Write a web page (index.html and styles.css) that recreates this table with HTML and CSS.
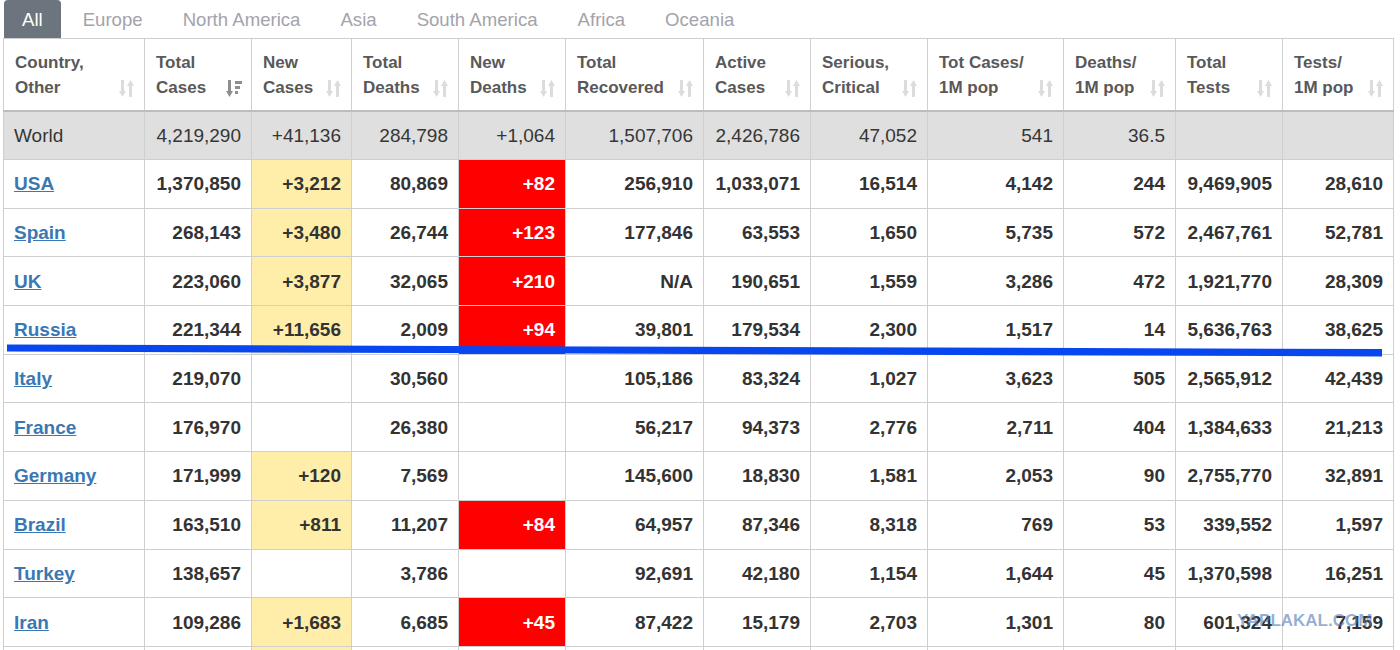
FILE: index.html
```html
<!DOCTYPE html>
<html>
<head>
<meta charset="utf-8">
<link rel="stylesheet" href="styles.css">
</head>
<body>
<div class="page">
  <nav class="tabs">
    <span class="tab active">All</span>
    <span class="tab">Europe</span>
    <span class="tab">North America</span>
    <span class="tab">Asia</span>
    <span class="tab">South America</span>
    <span class="tab">Africa</span>
    <span class="tab">Oceania</span>
  </nav>
  <table class="stats">
    <colgroup>
      <col style="width:141px"><col style="width:107px"><col style="width:100px"><col style="width:107px">
      <col style="width:107px"><col style="width:138px"><col style="width:107px"><col style="width:117px">
      <col style="width:136px"><col style="width:112px"><col style="width:107px"><col style="width:111px">
    </colgroup>
    <thead>
      <tr>
        <th><div class="hc"><span>Country,<br>Other</span><svg class="si" viewBox="0 0 16 17"><use href="#sort"/></svg></div></th>
        <th><div class="hc"><span>Total<br>Cases</span><svg class="si on" viewBox="0 0 16 17"><use href="#sortdesc"/></svg></div></th>
        <th><div class="hc"><span>New<br>Cases</span><svg class="si" viewBox="0 0 16 17"><use href="#sort"/></svg></div></th>
        <th><div class="hc"><span>Total<br>Deaths</span><svg class="si" viewBox="0 0 16 17"><use href="#sort"/></svg></div></th>
        <th><div class="hc"><span>New<br>Deaths</span><svg class="si" viewBox="0 0 16 17"><use href="#sort"/></svg></div></th>
        <th><div class="hc"><span>Total<br>Recovered</span><svg class="si" viewBox="0 0 16 17"><use href="#sort"/></svg></div></th>
        <th><div class="hc"><span>Active<br>Cases</span><svg class="si" viewBox="0 0 16 17"><use href="#sort"/></svg></div></th>
        <th><div class="hc"><span>Serious,<br>Critical</span><svg class="si" viewBox="0 0 16 17"><use href="#sort"/></svg></div></th>
        <th><div class="hc"><span>Tot&nbsp;Cases/<br>1M pop</span><svg class="si" viewBox="0 0 16 17"><use href="#sort"/></svg></div></th>
        <th><div class="hc"><span>Deaths/<br>1M pop</span><svg class="si" viewBox="0 0 16 17"><use href="#sort"/></svg></div></th>
        <th><div class="hc"><span>Total<br>Tests</span><svg class="si" viewBox="0 0 16 17"><use href="#sort"/></svg></div></th>
        <th><div class="hc"><span>Tests/<br>1M pop</span><svg class="si" viewBox="0 0 16 17"><use href="#sort"/></svg></div></th>
      </tr>
    </thead>
    <tbody>
      <tr class="world">
        <td class="name">World</td><td>4,219,290</td><td>+41,136</td><td>284,798</td><td>+1,064</td><td>1,507,706</td><td>2,426,786</td><td>47,052</td><td>541</td><td>36.5</td><td></td><td></td>
      </tr>
      <tr>
        <td class="name"><a href="#">USA</a></td><td>1,370,850</td><td class="nc">+3,212</td><td>80,869</td><td class="nd">+82</td><td>256,910</td><td>1,033,071</td><td>16,514</td><td>4,142</td><td>244</td><td>9,469,905</td><td>28,610</td>
      </tr>
      <tr>
        <td class="name"><a href="#">Spain</a></td><td>268,143</td><td class="nc">+3,480</td><td>26,744</td><td class="nd">+123</td><td>177,846</td><td>63,553</td><td>1,650</td><td>5,735</td><td>572</td><td>2,467,761</td><td>52,781</td>
      </tr>
      <tr>
        <td class="name"><a href="#">UK</a></td><td>223,060</td><td class="nc">+3,877</td><td>32,065</td><td class="nd">+210</td><td>N/A</td><td>190,651</td><td>1,559</td><td>3,286</td><td>472</td><td>1,921,770</td><td>28,309</td>
      </tr>
      <tr>
        <td class="name"><a href="#">Russia</a></td><td>221,344</td><td class="nc">+11,656</td><td>2,009</td><td class="nd">+94</td><td>39,801</td><td>179,534</td><td>2,300</td><td>1,517</td><td>14</td><td>5,636,763</td><td>38,625</td>
      </tr>
      <tr>
        <td class="name"><a href="#">Italy</a></td><td>219,070</td><td></td><td>30,560</td><td></td><td>105,186</td><td>83,324</td><td>1,027</td><td>3,623</td><td>505</td><td>2,565,912</td><td>42,439</td>
      </tr>
      <tr>
        <td class="name"><a href="#">France</a></td><td>176,970</td><td></td><td>26,380</td><td></td><td>56,217</td><td>94,373</td><td>2,776</td><td>2,711</td><td>404</td><td>1,384,633</td><td>21,213</td>
      </tr>
      <tr>
        <td class="name"><a href="#">Germany</a></td><td>171,999</td><td class="nc">+120</td><td>7,569</td><td></td><td>145,600</td><td>18,830</td><td>1,581</td><td>2,053</td><td>90</td><td>2,755,770</td><td>32,891</td>
      </tr>
      <tr>
        <td class="name"><a href="#">Brazil</a></td><td>163,510</td><td class="nc">+811</td><td>11,207</td><td class="nd">+84</td><td>64,957</td><td>87,346</td><td>8,318</td><td>769</td><td>53</td><td>339,552</td><td>1,597</td>
      </tr>
      <tr>
        <td class="name"><a href="#">Turkey</a></td><td>138,657</td><td></td><td>3,786</td><td></td><td>92,691</td><td>42,180</td><td>1,154</td><td>1,644</td><td>45</td><td>1,370,598</td><td>16,251</td>
      </tr>
      <tr>
        <td class="name"><a href="#">Iran</a></td><td>109,286</td><td class="nc">+1,683</td><td>6,685</td><td class="nd">+45</td><td>87,422</td><td>15,179</td><td>2,703</td><td>1,301</td><td>80</td><td>601,324</td><td>7,159</td>
      </tr>
      <tr>
        <td class="name"></td><td></td><td class="nc"></td><td></td><td></td><td></td><td></td><td></td><td></td><td></td><td></td><td></td>
      </tr>
    </tbody>
  </table>

  <svg class="marker" viewBox="0 0 1400 650" width="1400" height="650">
    <polygon points="7,344.5 1382,349 1382,356.5 7,351.5" fill="#0846f0"/>
  </svg>
  <div class="watermark">YAPLAKAL.COM</div>
</div>

<svg width="0" height="0" class="defs">
  <defs>
    <g id="sort">
      <rect x="2" y="0" width="3" height="12"/>
      <polygon points="0,11 7,11 3.5,17"/>
      <polygon points="8,6 15,6 11.5,0"/>
      <rect x="10" y="5" width="3" height="12"/>
    </g>
    <g id="sortdesc">
      <rect x="2" y="0" width="3" height="12"/>
      <polygon points="0,11 7,11 3.5,17"/>
      <rect x="9" y="1" width="7" height="3"/>
      <rect x="9" y="6" width="5" height="3"/>
      <rect x="9" y="11" width="3" height="3"/>
    </g>
  </defs>
</svg>
</body>
</html>
```

FILE: styles.css
```css
html, body {
  margin: 0;
  padding: 0;
  background: #fff;
}
body {
  font-family: "Liberation Sans", Arial, sans-serif;
  color: #363636;
}
.page {
  position: relative;
  width: 1400px;
  height: 650px;
  overflow: hidden;
}
.defs {
  position: absolute;
}
.tabs {
  display: flex;
  gap: 4px;
  height: 38px;
  padding-left: 4px;
}
.tab {
  display: flex;
  align-items: center;
  padding: 1px 18px 0;
  height: 38px;
  box-sizing: border-box;
  font-size: 18.6px;
  color: #a3a3ab;
  border-radius: 4px 4px 0 0;
}
.tab.active {
  background: #6c757d;
  color: #fff;
}
.stats {
  margin-left: 3px;
  border-collapse: collapse;
  table-layout: fixed;
  width: 1391px;
}
.stats th,
.stats td {
  border: 1px solid #cfcfcf;
}
.stats th {
  height: 71px;
  padding: 0 9px 0 11px;
  text-align: left;
  vertical-align: middle;
  font-size: 17px;
  line-height: 25px;
  font-weight: bold;
  color: #595959;
  border-bottom: 2px solid #bdbdbd;
}
.hc {
  display: flex;
  justify-content: space-between;
  align-items: flex-end;
}
.si {
  width: 16px;
  height: 17px;
  flex: none;
  margin-bottom: 3px;
  fill: #dcdcdc;
}
.si.on {
  fill: #8e8e8e;
}
.stats td {
  height: 46.7px;
  padding: 1px 10px 0;
  text-align: right;
  font-size: 19px;
  font-weight: bold;
  color: #333;
  white-space: nowrap;
}
.stats td.name {
  text-align: left;
}
.stats tr.world td {
  background: #dfdfdf;
  font-weight: normal;
  color: #363636;
  height: 46px;
}
.stats a {
  color: #3a78b4;
  text-decoration: underline;
}
.stats td.nc {
  background: #ffeeaa;
}
.stats td.nd {
  background: #ff0000;
  color: #fff;
}
.marker {
  position: absolute;
  left: 0;
  top: 0;
  pointer-events: none;
}
.watermark {
  position: absolute;
  left: 1237px;
  top: 611px;
  font-size: 17px;
  font-weight: bold;
  color: rgba(80, 120, 180, 0.6);
}
```
